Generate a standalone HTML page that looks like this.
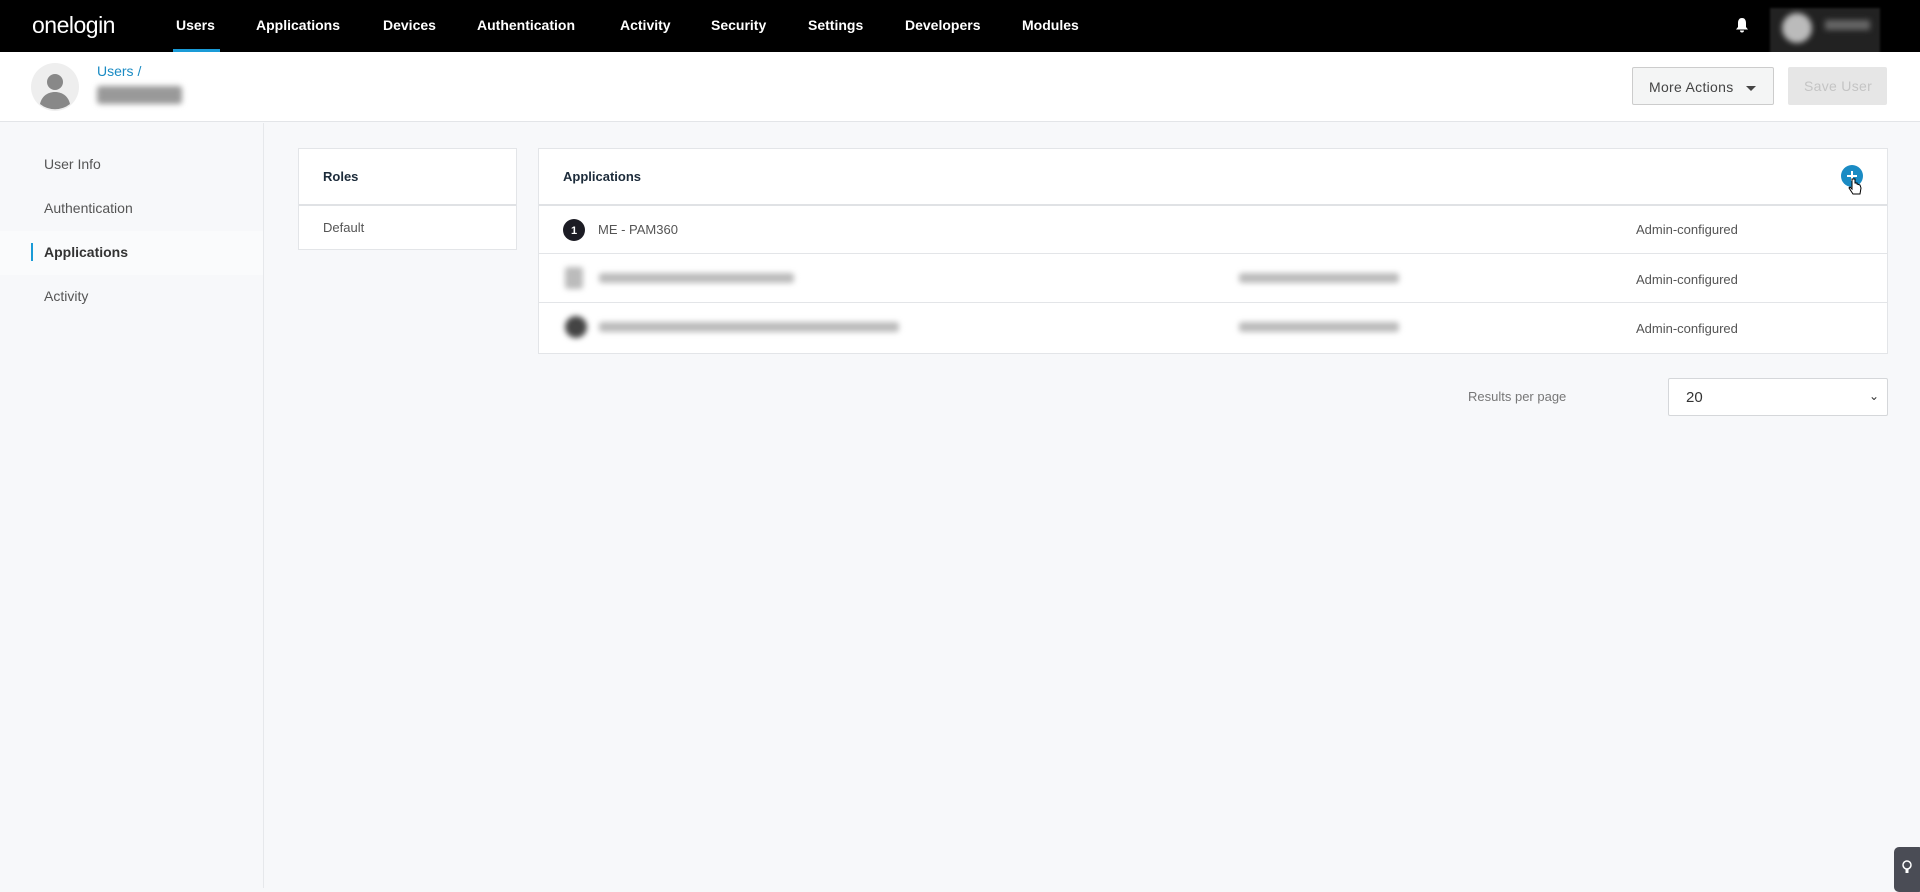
<!DOCTYPE html>
<html><head><meta charset="utf-8"><style>
*{box-sizing:border-box;margin:0;padding:0}
body{width:1920px;height:888px;overflow:hidden;background:#f7f8fa;font-family:"Liberation Sans",sans-serif;color:#444;position:relative}
.nav{position:absolute;left:0;top:0;width:1920px;height:52px;background:#000}
.nav span{position:absolute;top:17px;color:#fff;font-size:14px;font-weight:bold}
.logo{left:32px!important;top:12px!important;font-size:23px!important;letter-spacing:-0.5px;font-weight:normal!important}
.ul{position:absolute;left:173px;top:49px;width:47px;height:3px;background:#1a9bd7}
.hdr{position:absolute;left:0;top:52px;width:1920px;height:70px;background:#fff;border-bottom:1px solid #e3e5e8}
.side{position:absolute;left:0;top:123px;width:264px;height:765px;border-right:1px solid #e6e8eb}
.side div{position:absolute;left:44px;font-size:14px;color:#555}
.panel{position:absolute;background:#fff;border:1px solid #e3e5e8}
.row{position:absolute;left:0;right:0;border-top:1px solid #e3e5e8}
.t{position:absolute;font-size:13px;color:#555}
.blur{position:absolute;background:#d8d9dc;filter:blur(3px);border-radius:3px}
</style></head><body>
<div class="nav">
<span class="logo">onelogin</span>
<span style="left:176px">Users</span>
<span style="left:256px">Applications</span>
<span style="left:383px">Devices</span>
<span style="left:477px">Authentication</span>
<span style="left:620px">Activity</span>
<span style="left:711px">Security</span>
<span style="left:808px">Settings</span>
<span style="left:905px">Developers</span>
<span style="left:1022px">Modules</span>
<div class="ul"></div>
<svg style="position:absolute;left:1735px;top:17px" width="14" height="16" viewBox="0 0 14 16"><path d="M7 1C4 1 3 3.5 3 6v4L1 12.5h12L11 10V6C11 3.5 10 1 7 1z M5 13.5a2 2 0 0 0 4 0z" fill="#fff"/></svg>
<div style="position:absolute;left:1770px;top:8px;width:110px;height:47px;background:#222;filter:blur(1px)"></div>
<div style="position:absolute;left:1782px;top:13px;width:30px;height:30px;border-radius:50%;background:#bbb;filter:blur(3px)"></div>
<div style="position:absolute;left:1825px;top:20px;width:45px;height:10px;background:#666;filter:blur(3px)"></div>
</div>
<div class="hdr">
<svg style="position:absolute;left:31px;top:11px" width="48" height="48" viewBox="0 0 48 48"><circle cx="24" cy="24" r="24" fill="#eee"/><circle cx="24" cy="19" r="8" fill="#888"/><path d="M9 41c2-9 9-12 15-12s13 3 15 12a24 24 0 0 1-30 0z" fill="#888"/></svg>
<div style="position:absolute;left:97px;top:11px;font-size:14px;color:#1a8bc4">Users /</div>
<div class="blur" style="left:97px;top:34px;width:85px;height:18px;background:#999"></div>
<div style="position:absolute;left:1632px;top:15px;width:142px;height:38px;background:#f4f5f5;border:1px solid #ccc;border-radius:2px;font-size:14px;color:#444;padding:11px 0 0 16px;letter-spacing:.3px">More Actions <span style="display:inline-block;margin-left:8px;border-left:5px solid transparent;border-right:5px solid transparent;border-top:5px solid #444;vertical-align:middle"></span></div>
<div style="position:absolute;left:1788px;top:15px;width:99px;height:38px;background:#e6e6e6;border-radius:2px;font-size:14px;color:#c4c4c4;padding:11px 0 0 16px;letter-spacing:.3px">Save User</div>
</div>
<div class="side">
<div style="top:33px">User Info</div>
<div style="top:77px">Authentication</div>
<div style="left:0;top:108px;width:263px;height:44px;background:#fafbfc"></div>
<div style="left:31px;top:120px;width:2px;height:18px;background:#1a9bd7"></div>
<div style="top:121px;color:#333;font-weight:bold">Applications</div>
<div style="top:165px">Activity</div>
</div>
<div class="panel" style="left:298px;top:148px;width:219px;height:102px">
<div class="t" style="left:24px;top:20px;font-weight:bold;color:#1c2b3a">Roles</div>
<div class="row" style="top:55px;border-top:2px solid #e0e2e5"></div>
<div class="t" style="left:24px;top:71px">Default</div>
</div>
<div class="panel" style="left:538px;top:148px;width:1350px;height:206px">
<div class="t" style="left:24px;top:20px;font-weight:bold;color:#1c2b3a">Applications</div>
<svg style="position:absolute;left:1302px;top:16px" width="24" height="36" viewBox="0 0 24 36"><circle cx="11" cy="11" r="11" fill="#1a8bc4"/><path d="M11 6v10M6 11h10" stroke="#fff" stroke-width="2"/><path d="M11 14v10l-2-2-1 1 4 6h7l1-6-1-3-3-1v-1l-2 0v-4z" fill="#fff" stroke="#000" stroke-width="1"/></svg>
<div class="row" style="top:55px;border-top:2px solid #e0e2e5"></div>
<svg style="position:absolute;left:24px;top:70px" width="22" height="22"><circle cx="11" cy="11" r="11" fill="#1c1c24"/><text x="11" y="15" font-size="11" font-weight="bold" fill="#fff" text-anchor="middle" font-family="Liberation Sans">1</text></svg>
<div class="t" style="left:59px;top:73px">ME - PAM360</div>
<div class="t" style="left:1097px;top:73px">Admin-configured</div>
<div class="row" style="top:104px"></div>
<div class="blur" style="left:26px;top:118px;width:18px;height:22px;background:#bbb"></div>
<div class="blur" style="left:60px;top:124px;width:195px;height:10px;background:#bbb"></div>
<div class="blur" style="left:700px;top:124px;width:160px;height:10px;background:#bbb"></div>
<div class="t" style="left:1097px;top:123px">Admin-configured</div>
<div class="row" style="top:153px"></div>
<div class="blur" style="left:26px;top:167px;width:22px;height:22px;border-radius:50%;background:#444"></div>
<div class="blur" style="left:60px;top:173px;width:300px;height:10px;background:#bbb"></div>
<div class="blur" style="left:700px;top:173px;width:160px;height:10px;background:#bbb"></div>
<div class="t" style="left:1097px;top:172px">Admin-configured</div>
</div>
<div class="t" style="left:1468px;top:389px;color:#777">Results per page</div>
<div style="position:absolute;left:1668px;top:378px;width:220px;height:38px;background:#fff;border:1px solid #d5d7da;border-radius:2px;font-size:15px;color:#333;padding:10px 0 0 17px">20<span style="position:absolute;right:8px;top:10px;font-size:12px">&#8964;</span></div>
<div style="position:absolute;left:1894px;top:847px;width:30px;height:45px;background:#4a4c55;border-radius:5px"></div>
<svg style="position:absolute;left:1902px;top:860px" width="10" height="14"><circle cx="5" cy="5" r="4" fill="none" stroke="#fff" stroke-width="1.5"/><path d="M3.5 9v4h3V9" fill="#fff"/></svg>
</body></html>
